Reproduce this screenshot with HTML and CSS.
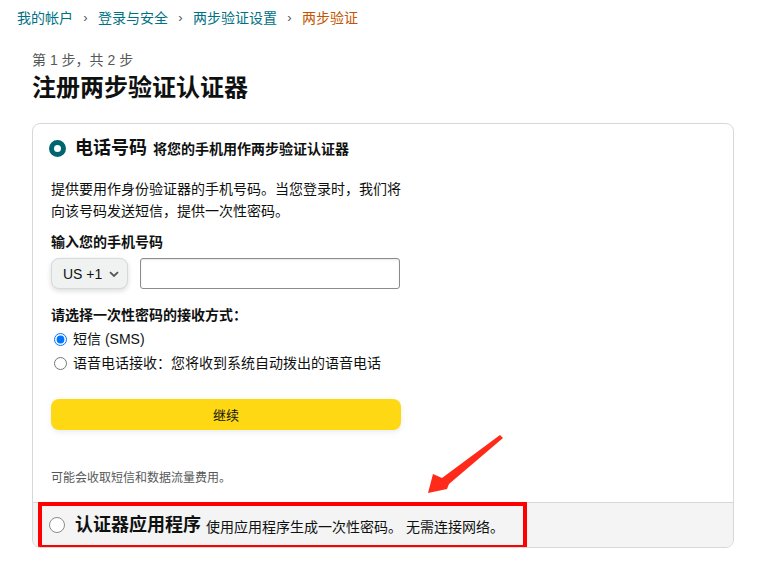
FILE: index.html
```html
<!DOCTYPE html>
<html lang="zh-CN">
<head>
<meta charset="utf-8">
<title>注册两步验证认证器</title>
<link rel="stylesheet" href="styles.css">
</head>
<body>
<nav class="breadcrumb">
  <a class="crumb">我的帐户</a><span class="sep">›</span>
  <a class="crumb">登录与安全</a><span class="sep">›</span>
  <a class="crumb">两步验证设置</a><span class="sep">›</span>
  <span class="crumb current">两步验证</span>
</nav>
<main class="main">
  <div class="step">第 1 步，共 2 步</div>
  <h1 class="title">注册两步验证认证器</h1>
  <section class="card">
    <div class="card-body">
      <div class="opt-head">
        <span class="big-radio checked"></span>
        <span class="opt-title">电话号码</span>
        <span class="opt-sub">将您的手机用作两步验证认证器</span>
      </div>
      <p class="desc">提供要用作身份验证器的手机号码。当您登录时，我们将<br>向该号码发送短信，提供一次性密码。</p>
      <div class="label">输入您的手机号码</div>
      <div class="phone-row">
        <div class="select">US +1 <svg class="chev" width="10" height="7" viewBox="0 0 10 7"><path d="M1 1.2 L5 5 L9 1.2" fill="none" stroke="#555" stroke-width="1.8"/></svg></div>
        <div class="input"></div>
      </div>
      <div class="label label2">请选择一次性密码的接收方式：</div>
      <label class="radio-row"><input type="radio" name="m" checked> 短信 (SMS)</label>
      <label class="radio-row"><input type="radio" name="m"> 语音电话接收：您将收到系统自动拨出的语音电话</label>
      <div class="button">继续</div>
      <p class="note">可能会收取短信和数据流量费用。</p>
    </div>
    <div class="card-foot">
      <span class="big-radio"></span>
      <span class="opt-title">认证器应用程序</span>
      <span class="opt-sub2">使用应用程序生成一次性密码。 无需连接网络。</span>
      <div class="highlight"></div>
    </div>
  </section>
</main>
<svg class="arrow" width="762" height="568" viewBox="0 0 762 568">
  <polygon points="428,493 433,474 442,478 500,435 503,438 449,484 447,489" fill="#ff2a1a"/>
</svg>
</body>
</html>
```
FILE: styles.css
```css
* { box-sizing: border-box; }
body {
  margin: 0;
  font-family: "Liberation Sans", "Noto Sans CJK SC", sans-serif;
  color: #0f1111;
  background: #fff;
  position: relative;
  width: 762px;
  height: 568px;
  overflow: hidden;
}
.breadcrumb {
  display: flex;
  align-items: center;
  padding: 7px 0 0 17px;
  height: 28px;
  font-size: 14px;
  line-height: 20px;
}
.crumb { color: #007185; }
.crumb.current { color: #c45500; }
.sep {
  color: #555;
  font-size: 13px;
  width: 25px;
  text-align: center;
}
.main { padding: 0 28px 0 32px; }
.step {
  margin-top: 23px;
  font-size: 14px;
  line-height: 18px;
  color: #565959;
}
.title {
  margin: 4px 0 0;
  font-size: 24px;
  line-height: 30px;
  font-weight: 700;
}
.card {
  margin-top: 20px;
  border: 1px solid #d5d9d9;
  border-radius: 8px;
  overflow: hidden;
}
.card-body { padding: 13px 18px 15px; }
.opt-head {
  display: flex;
  align-items: center;
  height: 22px;
}
.big-radio {
  width: 17px;
  height: 17px;
  border-radius: 50%;
  border: 1px solid #888c8c;
  background: #fff;
  flex: none;
  margin-right: 9px;
  margin-left: -2px;
}
.big-radio.checked { border: 5px solid #00656f; }
.opt-title {
  font-size: 18px;
  font-weight: 700;
  line-height: 22px;
}
.opt-sub {
  font-size: 14px;
  font-weight: 700;
  margin-left: 6px;
  line-height: 22px;
  padding-top: 2px;
}
.desc {
  margin: 19px 0 0;
  font-size: 14px;
  line-height: 22px;
}
.label {
  margin-top: 10px;
  font-size: 14px;
  font-weight: 700;
  line-height: 20px;
}
.label2 { margin-top: 16px; }
.phone-row {
  display: flex;
  gap: 12px;
  margin-top: 6px;
}
.select {
  width: 77px;
  height: 31px;
  background: #f0f2f2;
  border: 1px solid #d5d9d9;
  border-radius: 8px;
  box-shadow: 0 2px 5px rgba(15, 17, 17, 0.15);
  display: flex;
  align-items: center;
  padding-left: 11px;
  font-size: 14px;
  gap: 7px;
}
.chev { margin-top: 1px; }
.input {
  width: 260px;
  height: 31px;
  border: 1px solid #888c8c;
  border-radius: 3px;
  box-shadow: inset 0 1px 2px rgba(15, 17, 17, 0.1);
}
.radio-row {
  display: flex;
  align-items: center;
  font-size: 14px;
  line-height: 24px;
  height: 24px;
}
.radio-row:first-of-type { margin-top: 2px; }
.radio-row input {
  margin: 0 6px 0 3px;
  width: 13px;
  height: 13px;
}
.button {
  margin-top: 24px;
  width: 350px;
  height: 31px;
  background: #ffd814;
  border-radius: 8px;
  box-shadow: 0 2px 5px rgba(213, 217, 217, 0.5);
  display: flex;
  align-items: center;
  justify-content: center;
  font-size: 13px;
}
.note {
  margin: 39px 0 0;
  font-size: 12px;
  line-height: 18px;
  color: #565959;
}
.card-foot {
  position: relative;
  display: flex;
  align-items: center;
  height: 45px;
  border-top: 1px solid #d5d9d9;
  background: #f4f4f4;
  padding-left: 18px;
}
.card-foot .big-radio { width: 16px; height: 16px; margin-right: 10px; }
.opt-sub2 {
  font-size: 14px;
  margin-left: 5px;
  padding-top: 2px;
}
.highlight {
  position: absolute;
  left: 5px;
  top: -1px;
  width: 489px;
  height: 47px;
  border: 4px solid #ff0000;
}
.arrow {
  position: absolute;
  left: 0;
  top: 0;
  pointer-events: none;
}
```
